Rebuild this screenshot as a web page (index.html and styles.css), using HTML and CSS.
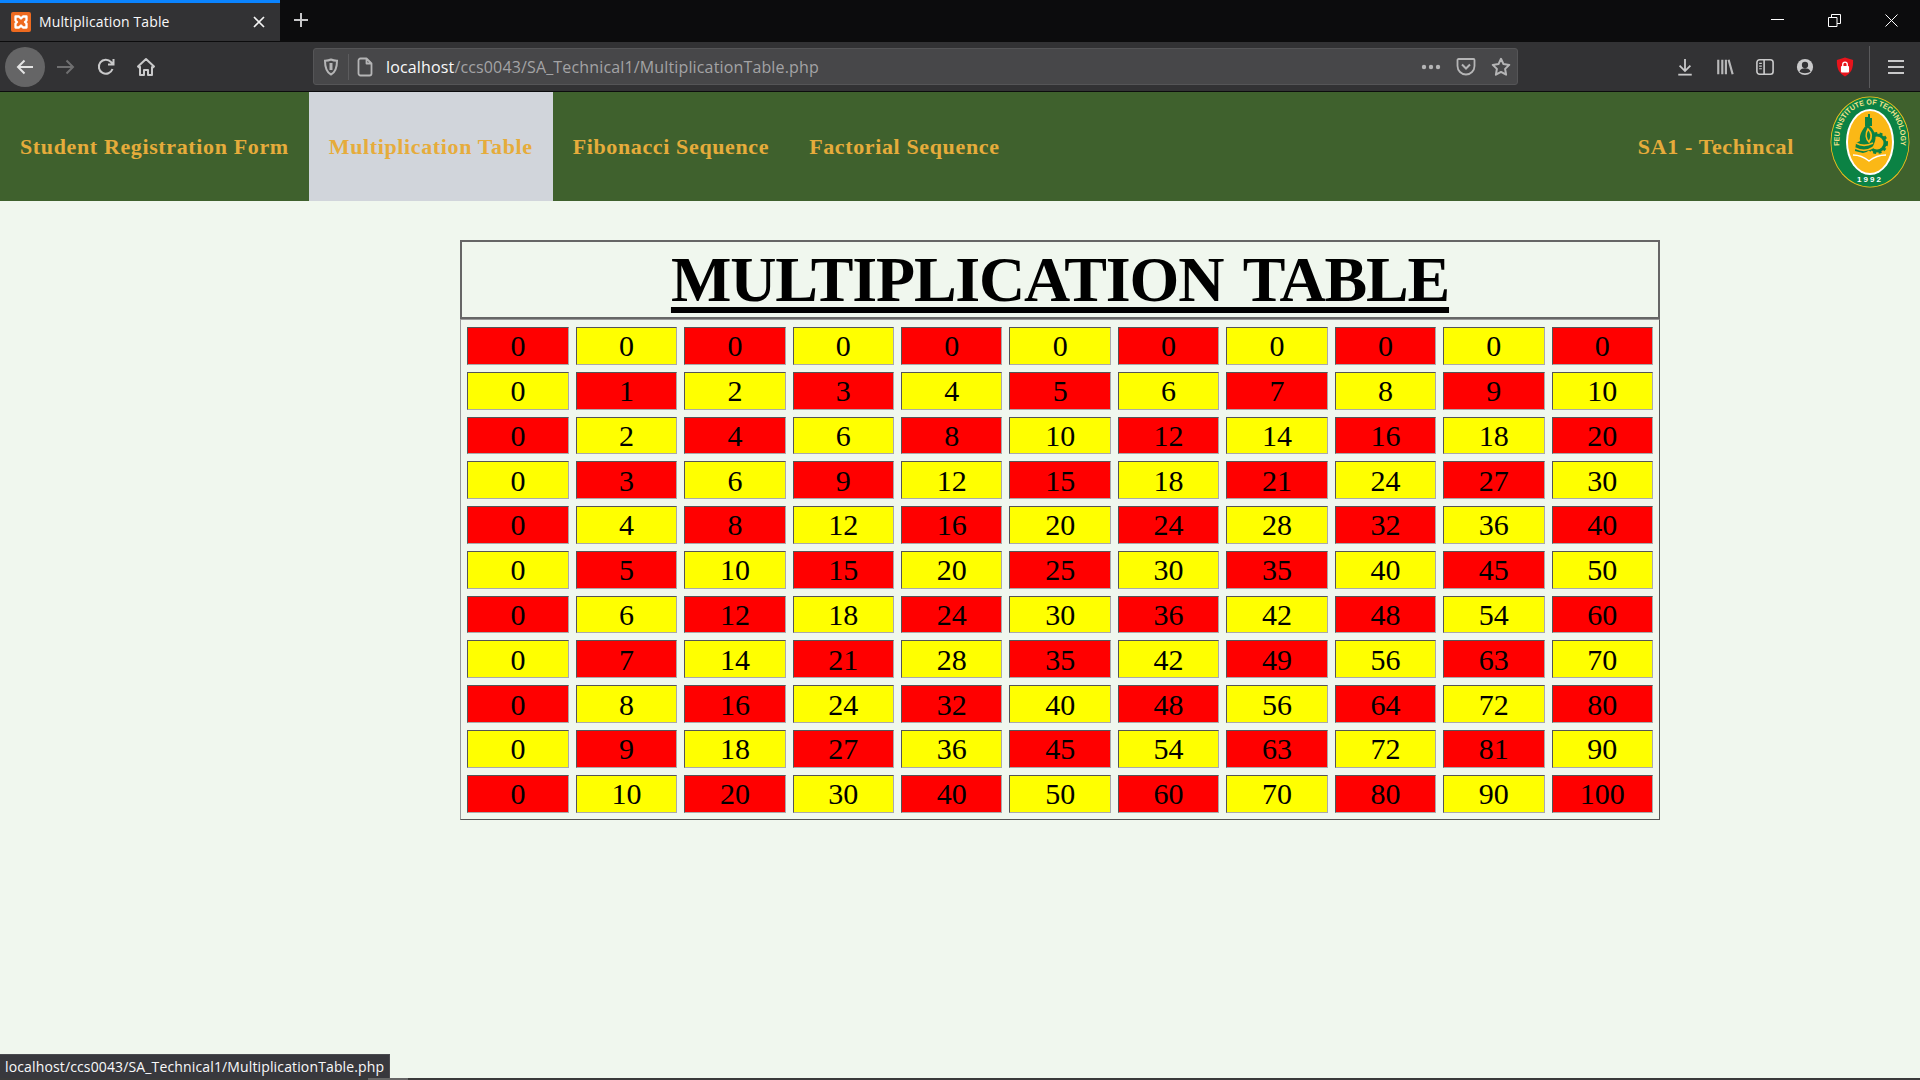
FILE: index.html
```html
<!DOCTYPE html>
<html lang="en">
<head>
<meta charset="utf-8">
<title>Multiplication Table</title>
<link rel="stylesheet" href="styles.css">
</head>
<body>
<div class="browser">
  <div class="tabstrip">
    <div class="tab">
      <svg class="favicon" viewBox="0 0 20 20"><rect width="20" height="20" rx="2" fill="#ee6a1f"/><path d="M4.500 4.500h3.500l2 2 2-2h3.500v4l-1.500 1.500 1.500 1.500v4h-3.500l-2-2-2 2h-3.500v-4l1.500-1.500-1.500-1.500z" fill="none" stroke="#fff" stroke-width="2.300" stroke-linejoin="round"/></svg>
      <span class="tab-title">Multiplication Table</span>
      <svg class="tab-close" viewBox="0 0 12 12"><path d="M1 1l10 10M11 1L1 11" stroke="#f4f4f4" stroke-width="1.700" fill="none"/></svg>
    </div>
    <svg class="newtab" viewBox="0 0 16 16"><path d="M8 1v14M1 8h14" stroke="#c8c8c9" stroke-width="2" fill="none"/></svg>
    <div class="winctl">
      <svg viewBox="0 0 13 13"><path d="M0 5.500h13" stroke="#fff" stroke-width="1" fill="none"/></svg>
      <svg viewBox="0 0 13 13"><path d="M.5 3.500h8.500v9h-8.500zM3.500 3.500v-3h9v9h-3.500" stroke="#fff" stroke-width="1" fill="none"/></svg>
      <svg viewBox="0 0 13 13"><path d="M.5.500l12 12M12.500.500l-12 12" stroke="#fff" stroke-width="1" fill="none"/></svg>
    </div>
  </div>
  <div class="toolbar">
    <div class="backbtn"><svg viewBox="0 0 20 20"><path d="M18 10H3M9.500 3.500L3 10l6.500 6.500" stroke="#e4e4e4" stroke-width="2" fill="none"/></svg></div>
    <svg class="tool forward" viewBox="0 0 20 20"><path d="M1 10h16M10.500 3.500L17 10l-6.500 6.500" stroke="#6f6f70" stroke-width="2" fill="none"/></svg>
    <svg class="tool" viewBox="0 0 20 20"><path d="M16.500 12a7 7 0 1 1-1.500-7l2 2M17.500 2v5.500H12" stroke="#c9c9ca" stroke-width="2" fill="none"/></svg>
    <svg class="tool" viewBox="0 0 20 20"><path d="M10 2L2 9.500l1.200 1 .8-.6V18h4v-5h4v5h4V9.900l.8.6 1.200-1z" stroke="#c9c9ca" stroke-width="2" fill="none" stroke-linejoin="round"/></svg>
    <div class="urlbar">
      <svg class="ico-shield" viewBox="0 0 16 18"><path d="M8 1.500c2 1 4 1.200 6 1.200 0 7-1.500 11.500-6 13.800C3.500 14.200 2 9.700 2 2.700c2 0 4-.2 6-1.200z" stroke="#b5b5b6" stroke-width="2" fill="none"/><path d="M8 5v7" stroke="#b5b5b6" stroke-width="3"/></svg>
      <span class="sep"></span>
      <svg class="ico-page" viewBox="0 0 16 20"><path d="M3.500 1.500h6l5 5v10a2 2 0 0 1-2 2h-9a2 2 0 0 1-2-2v-13a2 2 0 0 1 2-2zM9.500 1.500v5h5" stroke="#b5b5b6" stroke-width="1.800" fill="none" stroke-linejoin="round"/></svg>
      <span class="url"><span class="url-host">localhost</span>/ccs0043/SA_Technical1/MultiplicationTable.php</span>
      <svg class="ico-dots" viewBox="0 0 20 6"><circle cx="3" cy="3" r="2.200" fill="#b5b5b6"/><circle cx="10" cy="3" r="2.200" fill="#b5b5b6"/><circle cx="17" cy="3" r="2.200" fill="#b5b5b6"/></svg>
      <svg class="ico-pocket" viewBox="0 0 20 20"><path d="M2.500 2h15a1 1 0 0 1 1 1v6a8.500 8.500 0 0 1-17 0V3a1 1 0 0 1 1-1z" stroke="#b5b5b6" stroke-width="1.800" fill="none"/><path d="M6 7.500l4 4 4-4" stroke="#b5b5b6" stroke-width="2" fill="none"/></svg>
      <svg class="ico-star" viewBox="0 0 20 20"><path d="M10 1.800l2.500 5.300 5.800.8-4.200 4 1 5.800-5.100-2.800-5.100 2.800 1-5.800-4.200-4 5.800-.8z" stroke="#b5b5b6" stroke-width="2" fill="none" stroke-linejoin="round"/></svg>
    </div>
    <div class="toolright">
      <svg viewBox="0 0 18 20"><path d="M9 1v13M3 8.500L9 14.500l6-6" stroke="#c9c9ca" stroke-width="2" fill="none"/><path d="M1.500 18.500h15" stroke="#c9c9ca" stroke-width="2"/></svg>
      <svg viewBox="0 0 20 20"><path d="M2.500 2v16M7 2v16M11 2v16M14 2l4.500 16" stroke="#b8b8b9" stroke-width="2.400" fill="none"/></svg>
      <svg viewBox="0 0 20 20"><rect x="1" y="2" width="18" height="16" rx="3" stroke="#c9c9ca" stroke-width="1.800" fill="none"/><path d="M9 2v16" stroke="#c9c9ca" stroke-width="1.800"/><path d="M3.500 6h3M3.500 9h3M3.500 12h3" stroke="#c9c9ca" stroke-width="1.200"/></svg>
      <svg viewBox="0 0 20 20"><circle cx="10" cy="10" r="9" fill="#c9c9ca"/><circle cx="10" cy="7.800" r="3.500" fill="#323234"/><path d="M3.800 15c1.500-3 3.700-3.600 6.200-3.600s4.700.6 6.200 3.600c-3 2.500-9.500 2.500-12.400 0z" fill="#323234"/></svg>
      <svg class="addon" viewBox="0 0 20 22"><path d="M10 .5l9 2.800c.3 8.500-1.700 14.700-9 18.200C2.700 18 .7 11.800 1 3.300z" fill="#e8141c"/><rect x="5.500" y="10" width="9" height="7" rx="1" fill="#fff"/><path d="M7.500 10V8a2.500 2.500 0 0 1 5 0v2" stroke="#fff" stroke-width="1.500" fill="none"/></svg>
      <span class="vsep"></span>
      <svg class="burger" viewBox="0 0 16 16"><path d="M0 2h16M0 8h16M0 14h16" stroke="#c9c9ca" stroke-width="2.200"/></svg>
    </div>
  </div>
  <nav class="nav">
    <a class="nav-link">Student Registration Form</a>
    <a class="nav-link active">Multiplication Table</a>
    <a class="nav-link">Fibonacci Sequence</a>
    <a class="nav-link">Factorial Sequence</a>
    <span class="nav-spacer"></span>
    <a class="nav-link brand">SA1 - Techincal</a>
    <svg class="logo" viewBox="0 0 80 92">
      <ellipse cx="40" cy="46" rx="39.500" ry="45.500" fill="#f5c21c"/>
      <ellipse cx="40" cy="46" rx="38.700" ry="44.700" fill="#0b8244"/>
      <ellipse cx="40" cy="46" rx="24" ry="33" fill="#fff"/>
      <ellipse cx="40" cy="46" rx="22" ry="31" fill="#fbb816"/>
      <defs><path id="arc" d="M9.500 52C7 26 20 9.500 40 8.500c20 1 33 17.500 30.500 43.500"/></defs>
      <text class="logo-text"><textPath href="#arc" startOffset="50%" text-anchor="middle" textLength="116" lengthAdjust="spacingAndGlyphs">FEU INSTITUTE OF TECHNOLOGY</textPath></text>
      <text class="logo-year" x="40" y="86" text-anchor="middle">1992</text>
      <circle cx="47" cy="47" r="8" fill="none" stroke="#0b8244" stroke-width="3"/>
      <circle cx="47" cy="47" r="10" fill="none" stroke="#0b8244" stroke-width="2" stroke-dasharray="3 2.500"/>
      <path d="M35 21h3v-3h2v4h2v8h-7z" fill="#0b8244"/>
      <path d="M37 28c7 5 11 12 7 20-2 5-6 8-11 9l-8-2 1-8 4-2c-1-7 3-12 7-17z" fill="#0b8244"/>
      <path d="M38 33c-3 5-2 10 1 13 3-4 3-9-1-13zM26 47c5 3 11 3 17 0M25 52c6 3 13 3 19-1" stroke="#fbb816" stroke-width="1.700" fill="none"/>
      <path d="M23 59c6 0 11 2 16 6 5-4 10-6 17-6" stroke="#fff" stroke-width="1.600" fill="none"/>
    </svg>
  </nav>
  <main class="content">
    <div class="wrap">
      <h1 class="title">MULTIPLICATION TABLE</h1>
      <table class="grid">
        <tr><td class="r">0</td><td class="y">0</td><td class="r">0</td><td class="y">0</td><td class="r">0</td><td class="y">0</td><td class="r">0</td><td class="y">0</td><td class="r">0</td><td class="y">0</td><td class="r">0</td></tr>
        <tr><td class="y">0</td><td class="r">1</td><td class="y">2</td><td class="r">3</td><td class="y">4</td><td class="r">5</td><td class="y">6</td><td class="r">7</td><td class="y">8</td><td class="r">9</td><td class="y">10</td></tr>
        <tr><td class="r">0</td><td class="y">2</td><td class="r">4</td><td class="y">6</td><td class="r">8</td><td class="y">10</td><td class="r">12</td><td class="y">14</td><td class="r">16</td><td class="y">18</td><td class="r">20</td></tr>
        <tr><td class="y">0</td><td class="r">3</td><td class="y">6</td><td class="r">9</td><td class="y">12</td><td class="r">15</td><td class="y">18</td><td class="r">21</td><td class="y">24</td><td class="r">27</td><td class="y">30</td></tr>
        <tr><td class="r">0</td><td class="y">4</td><td class="r">8</td><td class="y">12</td><td class="r">16</td><td class="y">20</td><td class="r">24</td><td class="y">28</td><td class="r">32</td><td class="y">36</td><td class="r">40</td></tr>
        <tr><td class="y">0</td><td class="r">5</td><td class="y">10</td><td class="r">15</td><td class="y">20</td><td class="r">25</td><td class="y">30</td><td class="r">35</td><td class="y">40</td><td class="r">45</td><td class="y">50</td></tr>
        <tr><td class="r">0</td><td class="y">6</td><td class="r">12</td><td class="y">18</td><td class="r">24</td><td class="y">30</td><td class="r">36</td><td class="y">42</td><td class="r">48</td><td class="y">54</td><td class="r">60</td></tr>
        <tr><td class="y">0</td><td class="r">7</td><td class="y">14</td><td class="r">21</td><td class="y">28</td><td class="r">35</td><td class="y">42</td><td class="r">49</td><td class="y">56</td><td class="r">63</td><td class="y">70</td></tr>
        <tr><td class="r">0</td><td class="y">8</td><td class="r">16</td><td class="y">24</td><td class="r">32</td><td class="y">40</td><td class="r">48</td><td class="y">56</td><td class="r">64</td><td class="y">72</td><td class="r">80</td></tr>
        <tr><td class="y">0</td><td class="r">9</td><td class="y">18</td><td class="r">27</td><td class="y">36</td><td class="r">45</td><td class="y">54</td><td class="r">63</td><td class="y">72</td><td class="r">81</td><td class="y">90</td></tr>
        <tr><td class="r">0</td><td class="y">10</td><td class="r">20</td><td class="y">30</td><td class="r">40</td><td class="y">50</td><td class="r">60</td><td class="y">70</td><td class="r">80</td><td class="y">90</td><td class="r">100</td></tr>
      </table>
    </div>
    <div class="status">localhost/ccs0043/SA_Technical1/MultiplicationTable.php</div>
  </main>
  <div class="bottomstrip"><span class="strip-mark"></span></div>
</div>
</body>
</html>
```
FILE: styles.css
```css
* { box-sizing: border-box; }
html, body { margin: 0; height: 100%; overflow: hidden; }
.browser { display: flex; flex-direction: column; height: 1080px; font-family: "Open Sans", "Noto Sans", sans-serif; }
svg { display: block; flex: none; }

.tabstrip { display: flex; align-items: stretch; height: 41px; flex: none; background: #0c0c0d; }
.tab { display: flex; align-items: center; width: 280px; background: #323234; border-top: 3px solid #0a84ff; padding: 0 15px 1px 11px; color: #f9f9fa; }
.favicon { width: 20px; height: 20px; }
.tab-title { margin-left: 8px; flex: 1; font-size: 14px; letter-spacing: .13px; white-space: nowrap; }
.tab-close { width: 12px; height: 12px; }
.newtab { width: 16px; height: 16px; margin: 12px 0 0 13px; }
.winctl { display: flex; align-items: center; gap: 44px; margin-left: auto; padding: 0 22px 1px 0; }
.winctl svg { width: 13px; height: 13px; }

.toolbar { display: flex; align-items: center; height: 51px; flex: none; background: #323234; border-bottom: 1px solid #0c0c0d; border-top: 1px solid #0c0c0d; padding: 0 16px 0 5px; }
.backbtn { width: 40px; height: 40px; border-radius: 50%; background: #656566; display: flex; align-items: center; justify-content: center; }
.backbtn svg { width: 20px; height: 20px; }
.tool { width: 20px; height: 20px; margin-left: 20px; }
.forward { margin-left: 11px; }
.urlbar { display: flex; align-items: center; width: 1205px; height: 37px; margin-left: 157px; background: #474749; border: 1px solid #555557; border-radius: 3px; padding: 0 6px 0 9px; }
.ico-shield { width: 16px; height: 18px; }
.sep { width: 1px; height: 26px; background: #5c5c5e; margin: 0 8px 0 9px; }
.ico-page { width: 16px; height: 20px; }
.url { margin-left: 13px; flex: 1; font-size: 16px; letter-spacing: .15px; color: #a3a3a5; white-space: nowrap; }
.url-host { color: #f9f9fa; }
.ico-dots { width: 20px; height: 6px; }
.ico-pocket { width: 20px; height: 20px; margin-left: 15px; }
.ico-star { width: 20px; height: 20px; margin-left: 15px; }
.toolright { display: flex; align-items: center; gap: 22px; margin-left: auto; }
.toolright svg { width: 18px; height: 18px; }
.toolright .burger { width: 16px; height: 16px; }
.toolright .addon { width: 18px; height: 20px; }
.vsep { width: 1px; height: 42px; background: #5a5a5c; margin: 0 -4px 0 -7px; }

.nav { display: flex; align-items: stretch; height: 109px; background: #3f612d; flex: none; }
.nav-link { display: flex; align-items: center; padding: 0 20px; font: bold 22px "Liberation Serif", serif; letter-spacing: .63px; color: #e6ac3b; white-space: nowrap; }
.active { background: #d1d5db; }
.nav-spacer { flex: 1; }
.brand { padding-right: 36px; }
.logo { width: 80px; height: 92px; align-self: center; margin: 0 10px 9px 0; }
.logo-text { font: bold 7.500px "Liberation Sans", sans-serif; fill: #f4e28c; }
.logo-year { font: bold 8px "Liberation Sans", sans-serif; fill: #fff; letter-spacing: 2px; }

.content { flex: 1; position: relative; background: #f0f7ee; padding-top: 39px; font-family: "Liberation Serif", serif; }
.wrap { width: 1200px; margin-left: 460px; }
.title { margin: 0; height: 79px; border: 2px solid #666; text-align: center; font: bold 64px/76px "Liberation Serif", serif; letter-spacing: -1.2px; word-spacing: 6px; color: #000; text-decoration: underline 6px; text-underline-offset: 6px; white-space: nowrap; }
.grid { display: grid; grid-template-columns: repeat(11, 1fr); grid-template-rows: repeat(11, 1fr); gap: 7px; width: 100%; height: 501px; padding: 7px 6px 6.500px 6.400px; border: 1px solid; border-color: #999 #555 #555 #999; }
.grid tbody, .grid tr { display: contents; }
.grid td { display: flex; align-items: center; justify-content: center; padding: 1px 0 0; border: 1px solid; border-color: #555 #aaa #aaa #555; font-size: 30px; color: #000; }
.r { background: #f00; }
.y { background: #ff0; }

.status { position: absolute; left: 0; bottom: 0; width: 390px; height: 24px; background: #38383d; border: 1px solid #4a4a4f; border-width: 1px 1px 0 0; color: #f9f9fa; font: 14px/24px "Open Sans", "Noto Sans", sans-serif; letter-spacing: .14px; padding-left: 5px; white-space: nowrap; }
.bottomstrip { height: 2px; flex: none; background: #3a3a3a; padding-left: 368px; }
.strip-mark { display: block; width: 40px; height: 2px; background: #666; }
```
